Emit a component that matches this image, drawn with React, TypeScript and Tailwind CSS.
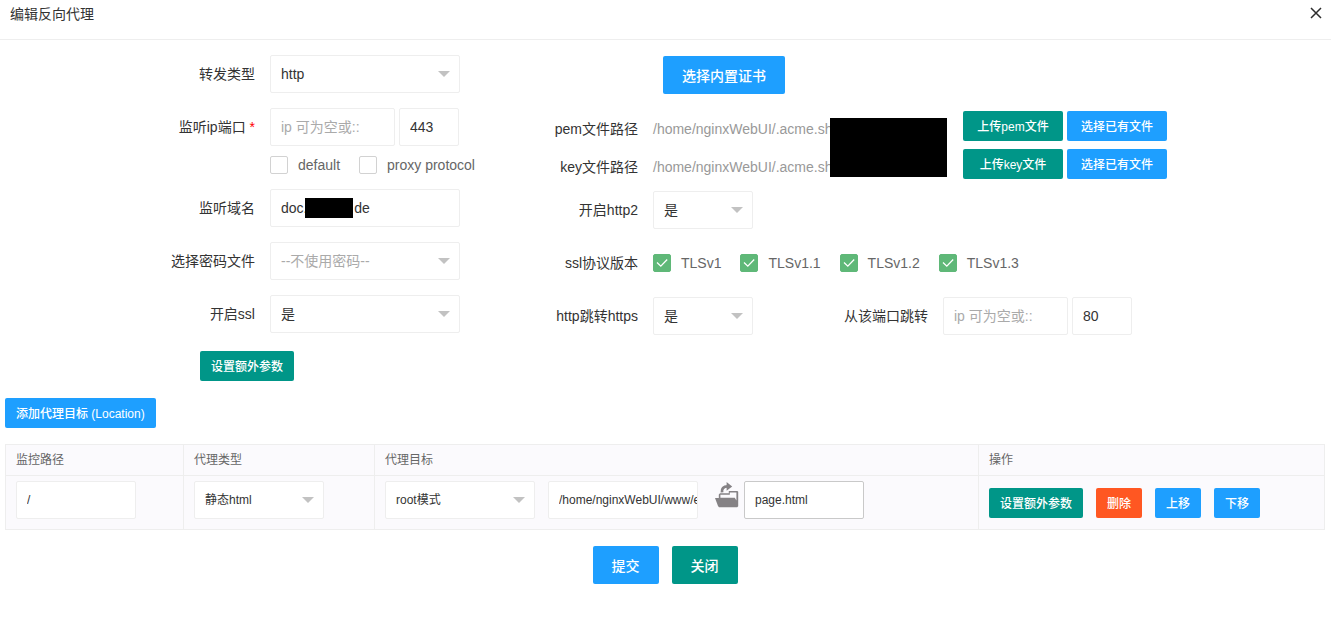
import { useId, type ReactNode } from "react";

const field =
  "block h-[38px] rounded-xs border border-[#eeeeee] bg-white pl-[10px] outline-none placeholder:text-[#aaaaaa]";

const tones = {
  blue: "bg-[#1e9fff]",
  green: "bg-[#009688]",
  red: "bg-[#ff5722]",
};

type ButtonProps = {
  children: ReactNode;
  tone: keyof typeof tones;
  size?: "small" | "large";
  fixed?: boolean;
};

function Button({ children, tone, size = "small", fixed = false }: ButtonProps) {
  const sizing = size === "large" ? "h-[38px] px-[19px] text-sm" : "h-[30px] text-xs";
  const padding = size === "large" ? "" : fixed ? "w-[100px]" : "px-[11px]";
  return (
    <button
      type="button"
      className={`${tones[tone]} ${sizing} ${padding} shrink-0 cursor-pointer rounded-xs pt-[2px] font-medium whitespace-nowrap text-white`}
    >
      {children}
    </button>
  );
}

type SelectProps = {
  id?: string;
  label?: string;
  value: string;
  width: string;
  muted?: boolean;
};

function Select({ id, label, value, width, muted = false }: SelectProps) {
  return (
    <div className={`relative shrink-0 ${width}`}>
      <select
        id={id}
        aria-label={label}
        defaultValue={value}
        className={`${field} w-full appearance-none pr-7 ${muted ? "text-[#aaaaaa]" : "text-[#333333]"}`}
      >
        <option value={value}>{value}</option>
      </select>
      <svg
        viewBox="0 0 12 6"
        className="pointer-events-none absolute top-4 right-[10px] h-[6px] w-3 fill-[#c2c2c2]"
        aria-hidden="true"
      >
        <path d="M0 0h12L6 6z" />
      </svg>
    </div>
  );
}

function FieldLabel({ htmlFor, children }: { htmlFor?: string; children: ReactNode }) {
  const cls = "w-full shrink-0 pr-[15px] text-right whitespace-nowrap";
  return htmlFor ? (
    <label htmlFor={htmlFor} className={cls}>
      {children}
    </label>
  ) : (
    <span className={cls}>{children}</span>
  );
}

function LeftRow({ id, label, children }: { id: string; label: ReactNode; children: ReactNode }) {
  return (
    <div className="flex items-center">
      <div className="flex w-[270px] shrink-0">
        <FieldLabel htmlFor={id}>{label}</FieldLabel>
      </div>
      {children}
    </div>
  );
}

function RightRow({ id, label, children }: { id?: string; label?: ReactNode; children: ReactNode }) {
  return (
    <div className="flex h-[38px] items-center">
      <div className="flex w-[130px] shrink-0">
        <FieldLabel htmlFor={id}>{label}</FieldLabel>
      </div>
      {children}
    </div>
  );
}

function Checkbox({ label, checked = false }: { label: string; checked?: boolean }) {
  const id = useId();
  return (
    <div className="flex shrink-0 items-center gap-[10px]">
      <span className="relative flex size-[18px]">
        <input
          id={id}
          type="checkbox"
          defaultChecked={checked}
          className="peer size-[18px] appearance-none rounded-xs border border-[#d2d2d2] bg-white checked:border-[#5fb878] checked:bg-[#5fb878]"
        />
        <svg
          viewBox="0 0 18 18"
          className="pointer-events-none absolute inset-0 hidden fill-none stroke-white peer-checked:block"
          aria-hidden="true"
        >
          <path d="M4 8.5l3.8 3.6L14.2 5.5" strokeWidth="1.3" />
        </svg>
      </span>
      <label htmlFor={id} className="whitespace-nowrap text-[#666666]">
        {label}
      </label>
    </div>
  );
}

function FileRow({ label, path, upload }: { label: string; path: string; upload: string }) {
  return (
    <div className="flex h-[38px] items-center">
      <span className="w-[130px] shrink-0 pt-[6px] pr-[15px] text-right">{label}</span>
      <span className="w-[310px] shrink-0 pt-[6px] text-[#999999]">{path}</span>
      <div className="flex gap-1">
        <Button tone="green" fixed>
          {upload}
        </Button>
        <Button tone="blue" fixed>
          选择已有文件
        </Button>
      </div>
    </div>
  );
}

function FolderIcon() {
  return (
    <svg viewBox="0 0 24 26" className="block h-[26px] w-6" aria-hidden="true">
      <path
        d="M0 16h3.8v-3.6l1.2-1.2h8.8V9h8.6l.8.8V24.2l-1 1H4L3 24z"
        fill="#858285"
      />
      <path d="M5.4 12.8h9.4v-2.2h6.6v8l-1.6-2.8H5.4z" fill="#fbfafd" />
      <path d="M7 10.4C6.4 6.4 8.6 4.6 12.6 4.4" fill="none" stroke="#858285" strokeWidth="2.8" />
      <path d="M11.6 0l5.6 4.4-5.6 4.4z" fill="#858285" />
    </svg>
  );
}

export default function App() {
  const cell = "border border-[#eeeeee] px-[10px] text-left font-normal";
  return (
    <div className="min-h-screen bg-white font-['Liberation_Sans','Noto_Sans_CJK_SC',sans-serif] text-sm text-[#333333]">
      <header className="flex h-10 items-start justify-between border-b border-[#eeeeee] pt-1 pr-[9px] pl-[10px]">
        <h1>编辑反向代理</h1>
        <button type="button" aria-label="关闭窗口" className="mt-[3px] cursor-pointer">
          <svg viewBox="0 0 12 12" className="size-3 stroke-[#2d2d2d]" aria-hidden="true">
            <path d="M1 1l10 10M11 1L1 11" strokeWidth="1.5" />
          </svg>
        </button>
      </header>

      <form>
        <div className="flex">
          <section className="flex w-[508px] shrink-0 flex-col gap-[15px] pt-[15px]">
            <LeftRow id="forward-type" label="转发类型">
              <Select id="forward-type" value="http" width="w-[190px]" />
            </LeftRow>

            <div className="-mb-[10px] flex flex-col">
              <LeftRow
                id="listen-ip"
                label={
                  <>
                    监听ip端口 <span className="text-[#ff0000]">*</span>
                  </>
                }
              >
                <div className="flex gap-1">
                  <input id="listen-ip" placeholder="ip 可为空或::" className={`${field} w-[125px]`} />
                  <input aria-label="监听端口" defaultValue="443" className={`${field} w-[60px]`} />
                </div>
              </LeftRow>
              <div className="flex h-[38px] items-center gap-[19px] pl-[270px]">
                <Checkbox label="default" />
                <Checkbox label="proxy protocol" />
              </div>
            </div>

            <LeftRow id="server-name" label="监听域名">
              <div className="relative w-[190px]">
                <input
                  id="server-name"
                  defaultValue="doc.            de"
                  className={`${field} w-full`}
                />
                <span className="absolute top-[9px] left-[35px] h-5 w-12 bg-black" />
              </div>
            </LeftRow>

            <LeftRow id="password-file" label="选择密码文件">
              <Select id="password-file" value="--不使用密码--" width="w-[190px]" muted />
            </LeftRow>

            <LeftRow id="enable-ssl" label="开启ssl">
              <Select id="enable-ssl" value="是" width="w-[190px]" />
            </LeftRow>

            <div className="flex pt-[3px] pl-[200px]">
              <Button tone="green">设置额外参数</Button>
            </div>
          </section>

          <section className="flex flex-1 flex-col gap-[15px] pt-4 pl-[15px]">
            <RightRow>
              <div className="pl-[10px]">
                <Button tone="blue" size="large">
                  选择内置证书
                </Button>
              </div>
            </RightRow>

            <div className="relative -mt-[2px] -mb-[7px]">
              <FileRow label="pem文件路径" path="/home/nginxWebUI/.acme.sh" upload="上传pem文件" />
              <FileRow label="key文件路径" path="/home/nginxWebUI/.acme.sh" upload="上传key文件" />
              <span className="absolute top-[11px] left-[307px] h-[59px] w-[117px] bg-black" />
            </div>

            <RightRow id="enable-http2" label="开启http2">
              <Select id="enable-http2" value="是" width="w-[100px]" />
            </RightRow>

            <RightRow label="ssl协议版本">
              <div className="flex gap-[19px]">
                <Checkbox label="TLSv1" checked />
                <Checkbox label="TLSv1.1" checked />
                <Checkbox label="TLSv1.2" checked />
                <Checkbox label="TLSv1.3" checked />
              </div>
            </RightRow>

            <RightRow id="redirect-https" label="http跳转https">
              <Select id="redirect-https" value="是" width="w-[100px]" />
              <div className="flex w-[190px] shrink-0">
                <FieldLabel htmlFor="redirect-ip">从该端口跳转</FieldLabel>
              </div>
              <div className="flex gap-1">
                <input id="redirect-ip" placeholder="ip 可为空或::" className={`${field} w-[125px]`} />
                <input aria-label="跳转端口" defaultValue="80" className={`${field} w-[60px]`} />
              </div>
            </RightRow>
          </section>
        </div>

        <div className="flex flex-col gap-4 pt-[17px] pr-[6px] pl-[5px]">
          <div className="flex">
            <Button tone="blue">添加代理目标 (Location)</Button>
          </div>

          <table className="w-full table-fixed border-collapse bg-[#fbfafd] text-xs">
            <thead className="text-[#666666]">
              <tr className="h-[31px]">
                <th className={`${cell} w-[178px]`}>监控路径</th>
                <th className={`${cell} w-[191px]`}>代理类型</th>
                <th className={cell}>代理目标</th>
                <th className={`${cell} w-[346px]`}>操作</th>
              </tr>
            </thead>
            <tbody>
              <tr>
                <td className={`${cell} pt-[5px] pb-[10px]`}>
                  <input aria-label="监控路径" defaultValue="/" className={`${field} w-[120px]`} />
                </td>
                <td className={`${cell} pt-[5px] pb-[10px]`}>
                  <Select label="代理类型" value="静态html" width="w-[130px]" />
                </td>
                <td className={`${cell} pt-[5px] pb-[10px]`}>
                  <div className="flex">
                    <Select label="代理目标" value="root模式" width="w-[150px]" />
                    <input
                      aria-label="根目录"
                      defaultValue="/home/nginxWebUI/www/example"
                      className={`${field} ml-[13px] w-[150px]`}
                    />
                    <button
                      type="button"
                      aria-label="选择目录"
                      className="mr-[5px] ml-[17px] flex cursor-pointer items-start pt-px"
                    >
                      <FolderIcon />
                    </button>
                    <input
                      aria-label="默认页"
                      defaultValue="page.html"
                      className="block h-[38px] w-[120px] rounded-xs border border-[#c9c9c9] bg-white pl-[10px] outline-none"
                    />
                  </div>
                </td>
                <td className={cell}>
                  <div className="flex gap-[13px]">
                    <Button tone="green">设置额外参数</Button>
                    <Button tone="red">删除</Button>
                    <Button tone="blue">上移</Button>
                    <Button tone="blue">下移</Button>
                  </div>
                </td>
              </tr>
            </tbody>
          </table>

          <div className="flex justify-center gap-[13px]">
            <Button tone="blue" size="large">
              提交
            </Button>
            <Button tone="green" size="large">
              关闭
            </Button>
          </div>
        </div>
      </form>
    </div>
  );
}
